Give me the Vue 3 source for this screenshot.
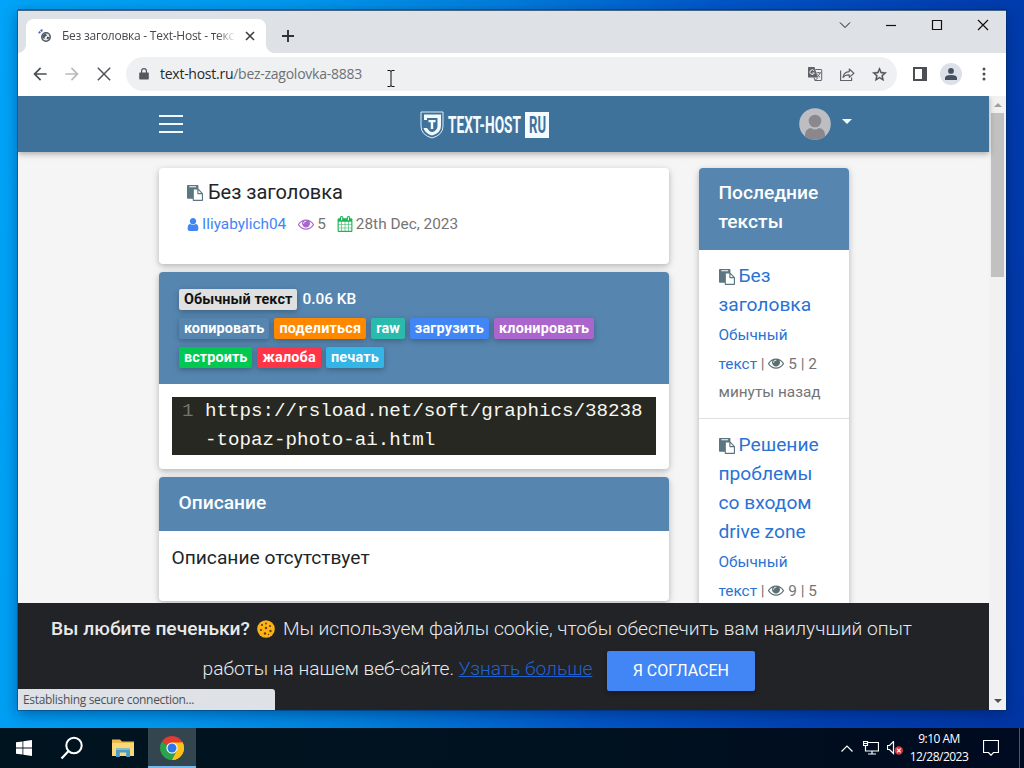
<template>
    <div class="desktop">
        <div class="window">
            <!-- Tab strip -->
            <div class="tab-strip">
                <div class="tab">
                    <svg class="favicon" viewBox="0 0 16 16" width="16" height="16">
                        <circle cx="9" cy="9" r="4.2" fill="#e8eaec" stroke="#4c5560" stroke-width="1.5" />
                        <path d="M5.500 7l3-1.500 1.500 2-2.200 1.300-.4 2.400L5.500 9.500zM10 8.800l2.500.2-1.200 2.500-1.600-.8z" fill="#4c5560" />
                        <path d="M2.200 5.400Q2.800 2.600 6 2.300" fill="none" stroke="#3d63b8" stroke-width="2" stroke-dasharray="2 .8" />
                    </svg>
                    <span class="tab-title">Без заголовка - Text-Host - текс</span>
                    <svg class="tab-close" viewBox="0 0 10 10" width="10" height="10">
                        <path d="M1 1l8 8M9 1l-8 8" stroke="#3c4043" stroke-width="1.6" />
                    </svg>
                </div>
                <svg class="new-tab" viewBox="0 0 12 12" width="12" height="12">
                    <path d="M6 0v12M0 6h12" stroke="#2f3337" stroke-width="1.9" />
                </svg>
                <div class="window-controls">
                    <svg viewBox="0 0 12 12" width="12" height="12"><path d="M1 3.500l5 5 5-5" stroke-width="1" /></svg>
                    <svg viewBox="0 0 12 12" width="12" height="12"><path d="M1 6.500h10" /></svg>
                    <svg viewBox="0 0 12 12" width="12" height="12"><path d="M1.500 1.500h9v9h-9z" /></svg>
                    <svg viewBox="0 0 12 12" width="12" height="12"><path d="M1 1l10 10M11 1L1 11" /></svg>
                </div>
            </div>

            <!-- Toolbar -->
            <div class="toolbar">
                <svg class="nav-icon" viewBox="0 0 24 24"><path d="M20 11H7.83l5.59-5.59L12 4l-8 8 8 8 1.41-1.41L7.83 13H20v-2z" /></svg>
                <svg class="nav-icon disabled" viewBox="0 0 24 24"><path d="M12 4l-1.41 1.41L16.17 11H4v2h12.17l-5.58 5.59L12 20l8-8z" /></svg>
                <svg class="nav-icon" viewBox="0 0 24 24"><path d="M20 5.2L18.8 4 12 10.8 5.2 4 4 5.2l6.8 6.8L4 18.8 5.2 20l6.8-6.8 6.8 6.8 1.2-1.2-6.8-6.8z" /></svg>
                <div class="address-bar">
                    <svg class="lock" viewBox="0 0 10 12" width="10" height="12">
                        <path d="M1 4.5h8q.8 0 .8.8v5.5q0 .8-.8.8H1q-.8 0-.8-.8V5.3q0-.8.8-.8z" fill="#55595e" />
                        <path d="M2.600 5V3a2.400 2.400 0 0 1 4.800 0v2" fill="none" stroke="#55595e" stroke-width="1.2" />
                    </svg>
                    <span class="url"><span class="host">text-host.ru</span>/bez-zagolovka-8883</span>
                    <div class="address-actions">
                        <svg viewBox="0 0 16 16" width="16" height="16">
                            <path d="M1.500 1h6l3.300 10.500H1.500q-.5 0-.5-.5V1.500q0-.5.5-.5z" fill="#5f6368" />
                            <path d="M8.500 3.500h5.500q.7 0 .7.7v9.600q0 .7-.7.7H8L7 11.500M11 11.500l-3 3" fill="none" stroke="#5f6368" />
                            <path d="M7.200 4.800A2.300 2.300 0 1 0 7.400 7H5.400" fill="none" stroke="#f1f3f4" />
                            <path d="M9.400 6.800H14M11.500 6v.8M13.200 6.800q-.8 2.700-3 4.200M10.400 8.300q1 1.800 2.800 3" fill="none" stroke="#5f6368" stroke-width=".9" />
                        </svg>
                        <svg viewBox="0 0 16 16" width="16" height="16">
                            <path d="M1.600 4.500v10h11v-3M4 11.500Q4.700 5.800 10.300 5.600V3l4.600 4.200-4.600 4.200V8.800Q6 8.600 4 11.500z" fill="none" stroke="#5f6368" stroke-width="1.2" stroke-linejoin="round" />
                        </svg>
                        <svg viewBox="0 0 24 24" width="17" height="17">
                            <path d="M22 9.240l-7.190-.62L12 2 9.190 8.630 2 9.240l5.460 4.730L5.820 21 12 17.270 18.180 21l-1.630-7.030L22 9.240zM12 15.400l-3.760 2.270 1-4.280-3.320-2.880 4.380-.38L12 6.100l1.710 4.040 4.380.38-3.320 2.880 1 4.280L12 15.400z" fill="#4e5257" stroke="#4e5257" stroke-width=".5" />
                        </svg>
                    </div>
                </div>
                <svg class="side-panel" viewBox="0 0 14 14" width="14" height="14">
                    <path d="M0 0h14v14H0zM2 2v10h7V2z" fill="#4b4f54" fill-rule="evenodd" />
                </svg>
                <div class="profile">
                    <svg viewBox="0 0 12 12" width="12" height="12">
                        <circle cx="6" cy="2.900" r="2.900" fill="#46505f" />
                        <path d="M0 12v-2q0-3 6-3t6 3v2z" fill="#46505f" />
                    </svg>
                </div>
                <svg class="kebab" viewBox="0 0 4 14" width="4" height="14">
                    <circle v-for="y in [2, 7, 12]" :key="y" cx="2" :cy="y" r="1.5" fill="#4b4f54" />
                </svg>
            </div>

            <!-- Page -->
            <div class="viewport">
                <div class="page">
                    <header class="site-header">
                        <div class="burger"><i></i><i></i><i></i></div>
                        <svg class="logo" viewBox="0 0 130 28" width="130" height="28">
                            <path d="M1 1h22v14q0 9-11 12Q1 24 1 15z" fill="none" stroke="#dcecf8" stroke-width="1" />
                            <path d="M4 3.500h17v11.500q0 7-9 9.500-7.500-2.300-8.500-7.500h3.500q1.500 3 5 4.300 5.500-1.800 5.500-6.300V7H7v2H4z" fill="#f4fbff" />
                            <path d="M8.500 9h7v2.300h-2.300V18h-2.400v-6.700H8.500z" fill="#f4fbff" />
                            <text class="logo-text" x="28" y="22" textLength="73" lengthAdjust="spacingAndGlyphs">TEXT-HOST</text>
                            <path d="M105 1h24v26h-24z" fill="#f4fbff" />
                            <text class="logo-ru" x="109" y="22" textLength="17" lengthAdjust="spacingAndGlyphs">RU</text>
                        </svg>
                        <div class="account">
                            <svg viewBox="0 0 32 32" width="32" height="32">
                                <clipPath id="avatar"><circle cx="16" cy="16" r="15.800" /></clipPath>
                                <g clip-path="url(#avatar)">
                                    <path d="M0 0h32v32H0z" fill="#bdbdc4" />
                                    <circle cx="16" cy="13" r="6.300" fill="#8b888d" />
                                    <path d="M6 32v-5q0-6 6-7 4 3 8 0 6 1 6 7v5z" fill="#8b888d" />
                                </g>
                            </svg>
                            <span class="caret"></span>
                        </div>
                    </header>

                    <div class="columns">
                        <main class="main-column">
                            <section class="card title-card">
                                <h1 class="title"><svg class="paste" viewBox="0 0 1792 1792"><path :d="icons.paste" /></svg><span>Без заголовка</span></h1>
                                <div class="meta">
                                    <svg class="user" viewBox="192 0 1408 1792"><path :d="icons.user" /></svg>
                                    <a class="author">Iliyabylich04</a>
                                    <svg class="eye purple" viewBox="0 0 1792 1792"><path :d="icons.eye" /></svg>
                                    <span class="views">5</span>
                                    <svg class="calendar" viewBox="0 0 1792 1792"><path :d="icons.calendar" /></svg>
                                    <span>28th Dec, 2023</span>
                                </div>
                            </section>

                            <section class="card paste-card">
                                <div class="card-header paste-header">
                                    <div class="badge-row">
                                        <span class="badge plain">Обычный текст</span>
                                        <span class="size">0.06 KB</span>
                                    </div>
                                    <div v-for="(row, i) in actions" :key="i" class="badge-row">
                                        <span v-for="item in row" :key="item.label" class="badge" :class="item.color">{{ item.label }}</span>
                                    </div>
                                </div>
                                <div class="code">
                                    <span class="line-number">1</span>
                                    <span class="code-text">https://rsload.net/soft/graphics/38238<br>-topaz-photo-ai.html</span>
                                </div>
                            </section>

                            <section class="card description-card">
                                <div class="card-header description-header">Описание</div>
                                <p class="description">Описание отсутствует</p>
                            </section>
                        </main>

                        <aside class="card sidebar">
                            <div class="card-header sidebar-header">Последние<br>тексты</div>
                            <div v-for="item in recent" :key="item.views" class="recent-item">
                                <div v-for="(line, i) in item.title" :key="line" class="recent-line">
                                    <svg v-if="i === 0" class="paste" viewBox="0 0 1792 1792"><path :d="icons.paste" /></svg><a>{{ line }}</a>
                                </div>
                                <div class="recent-meta"><a>Обычный</a></div>
                                <div class="recent-meta">
                                    <a>текст</a> | <svg class="eye" viewBox="0 0 1792 1792"><path :d="icons.eye" /></svg> {{ item.views }} | {{ item.age }}
                                </div>
                                <div v-if="item.unit" class="recent-meta last">{{ item.unit }}</div>
                            </div>
                        </aside>
                    </div>

                    <div class="cookie-banner">
                        <div class="cookie-row">
                            <b>Вы любите печеньки?</b>
                            <svg class="cookie" viewBox="0 0 18 18" width="18" height="18">
                                <circle cx="9" cy="9" r="8.800" fill="#fcb316" />
                                <circle v-for="(c, i) in chips" :key="i" :cx="c[0]" :cy="c[1]" :r="c[2]" fill="#6b3a13" />
                            </svg>
                            <span>Мы используем файлы cookie, чтобы обеспечить вам наилучший опыт</span>
                        </div>
                        <div class="cookie-row">
                            <span class="cookie-tail">работы на нашем веб-сайте.</span>
                            <a class="learn-more">Узнать больше</a>
                            <button class="agree">Я СОГЛАСЕН</button>
                        </div>
                    </div>
                </div>

                <div class="scrollbar">
                    <span class="arrow up"></span>
                    <span class="thumb"></span>
                    <span class="arrow down"></span>
                </div>
                <div class="status">Establishing secure connection...</div>
            </div>
        </div>

        <!-- Taskbar -->
        <div class="taskbar">
            <div class="task">
                <svg viewBox="0 0 16 16" width="16" height="16">
                    <path d="M0 2.300l6.500-.9v6.200H0zM7.300 1.300L16 0v7.600H7.300zM0 8.400h6.500v6.200L0 13.700zM7.300 8.400H16V16l-8.700-1.300z" fill="#fff" />
                </svg>
            </div>
            <div class="task search">
                <svg viewBox="0 0 24 24" width="24" height="24">
                    <circle cx="14" cy="9.500" r="7.700" fill="none" stroke="#fff" stroke-width="2" />
                    <path d="M8.600 15L1.500 22.500" stroke="#fff" stroke-width="2.200" />
                </svg>
            </div>
            <div class="task files">
                <svg viewBox="0 0 22 20" width="22" height="20">
                    <path d="M0 1.500h8l2 2h12V18H0z" fill="#e9b94b" />
                    <path d="M0 5h22v13H0z" fill="#fbd877" />
                    <path d="M4 10.500h14V19h-3.800v-4.500H7.800V19H4z" fill="#4a9cc6" />
                    <path d="M4 10.500h14v1.500H4z" fill="#78bfdf" />
                </svg>
            </div>
            <div class="task active">
                <svg viewBox="0 0 24 24" width="24" height="24">
                    <path d="M12 12L1.610 6A12 12 0 0 1 22.390 6z" fill="#e33b2e" />
                    <path d="M12 12l10.390-6A12 12 0 0 1 12 24z" fill="#fbc116" />
                    <path d="M12 12v12A12 12 0 0 1 1.610 6z" fill="#2ba24c" />
                    <path d="M12 6.500h10.700L22.390 6H12z" fill="#e33b2e" />
                    <path d="M12 6.500h10.650A12 12 0 0 1 12 24l4.800-9.200z" fill="#fbc116" />
                    <path d="M7.200 14.800L1.610 6 12 12l4.800 2.800L12 24z" fill="#2ba24c" />
                    <circle cx="12" cy="12" r="5.600" fill="#fff" />
                    <circle cx="12" cy="12" r="4.500" fill="#2f77e6" />
                </svg>
            </div>
            <div class="tray">
                <svg viewBox="0 0 12 7" width="12" height="7"><path d="M.5 6.500L6 1l5.500 5.500" /></svg>
                <svg class="tray-net" viewBox="0 0 16 14" width="16" height="14">
                    <path d="M5 1.500h10.500v8.500H4.500M.5.500h4v4h-4zM2.500 4.500v5.500h2M9 10v3M5 13h8M1 2.500h3" />
                </svg>
                <svg class="tray-sound" viewBox="0 0 16 14" width="16" height="14">
                    <path d="M.5 4.500h2l4-4v12l-4-4h-2z" />
                    <circle class="mute" cx="11.800" cy="9.500" r="4.200" />
                    <path d="M10 7.700l3.600 3.600M13.600 7.700L10 11.300" />
                </svg>
                <div class="clock">9:10 AM<br>12/28/2023</div>
                <svg viewBox="0 0 16 16" width="16" height="16"><path d="M.5.500h15v12h-5L8 15.200 5.500 12.500h-5z" /></svg>
            </div>
        </div>

        <svg class="pointer" viewBox="0 0 8 17" width="8" height="17">
            <path d="M.5.500h2.500l1 .8 1-.8h2.500M4 1v15M.5 16.500H3l1-.8 1 .8h2.500" fill="none" stroke="#111" />
        </svg>
    </div>
</template>

<script setup>
const icons = {
    paste: 'M768 1664h896v-640h-416q-40 0-68-28t-28-68v-416h-384v1152zm256-1440v-64q0-13-9.5-22.5t-22.5-9.5h-704q-13 0-22.5 9.5t-9.5 22.5v64q0 13 9.5 22.5t22.5 9.5h704q13 0 22.5-9.5t9.5-22.5zm256 672h299l-299-299v299zm512 128v672q0 40-28 68t-68 28h-960q-40 0-68-28t-28-68v-160h-544q-40 0-68-28t-28-68v-1344q0-40 28-68t68-28h1088q40 0 68 28t28 68v328q21 13 36 28l408 408q28 28 48 76t20 88z',
    eye: 'M1664 960q-152-236-381-353 61 104 61 225 0 185-131.5 316.5t-316.5 131.5-316.5-131.5-131.5-316.5q0-121 61-225-229 117-381 353 133 205 333.5 326.5t434.5 121.5 434.5-121.5 333.5-326.5zm-720-384q0-20-14-34t-34-14q-125 0-214.5 89.5t-89.5 214.5q0 20 14 34t34 14 34-14 14-34q0-86 61-147t147-61q20 0 34-14t14-34zm848 384q0 34-20 69-140 230-376.5 368.5t-499.5 138.5-499.5-139-376.5-368q-20-35-20-69t20-69q140-229 376.5-368t499.5-139 499.5 139 376.5 368q20 35 20 69z',
    user: 'M1536 1399q0 109-62.5 187t-150.5 78h-854q-88 0-150.5-78t-62.5-187q0-85 8.5-160.5t31.5-152 58.5-131 94-89 134.5-34.5q131 128 313 128t313-128q76 0 134.5 34.5t94 89 58.5 131 31.5 152 8.5 160.5zm-256-887q0 159-112.5 271.5t-271.5 112.5-271.5-112.5-112.5-271.5 112.5-271.5 271.5-112.5 271.5 112.5 112.5 271.5z',
    calendar: 'M192 1664h288v-288h-288v288zm352 0h320v-288h-320v288zm-352-352h288v-320h-288v320zm352 0h320v-320h-320v320zm-352-384h288v-288h-288v288zm736 736h320v-288h-320v288zm-384-736h320v-288h-320v288zm768 736h288v-288h-288v288zm-384-352h320v-320h-320v320zm-352-864v-288q0-13-9.5-22.5t-22.5-9.5h-64q-13 0-22.5 9.5t-9.5 22.5v288q0 13 9.5 22.5t22.5 9.5h64q13 0 22.5-9.5t9.5-22.5zm736 864h288v-320h-288v320zm-384-384h320v-288h-320v288zm384 0h288v-288h-288v288zm32-480v-288q0-13-9.5-22.5t-22.5-9.5h-64q-13 0-22.5 9.5t-9.5 22.5v288q0 13 9.5 22.5t22.5 9.5h64q13 0 22.5-9.5t9.5-22.5zm384-64v1280q0 52-38 90t-90 38h-1408q-52 0-90-38t-38-90v-1280q0-52 38-90t90-38h128v-96q0-66 47-113t113-47h64q66 0 113 47t47 113v96h384v-96q0-66 47-113t113-47h64q66 0 113 47t47 113v96h128q52 0 90 38t38 90z'
};

const actions = [
    [
        { label: 'копировать', color: 'steel' },
        { label: 'поделиться', color: 'orange' },
        { label: 'raw', color: 'teal' },
        { label: 'загрузить', color: 'blue' },
        { label: 'клонировать', color: 'violet' }
    ],
    [
        { label: 'встроить', color: 'green' },
        { label: 'жалоба', color: 'red' },
        { label: 'печать', color: 'sky' }
    ]
];

const recent = [
    { title: ['Без', 'заголовка'], views: 5, age: 2, unit: 'минуты назад' },
    { title: ['Решение', 'проблемы', 'со входом', 'drive zone'], views: 9, age: 5 }
];

// Chocolate chips: x, y, radius
const chips = [[5, 5, 1.1], [9, 3.5, 0.9], [13, 6, 1.1], [9, 8, 1.2], [4, 10, 1.1], [13.5, 11, 1.2], [8, 13.5, 1.2], [11.5, 14.5, 0.7]];
</script>

<style>
body {
    margin: 0;
    overflow: hidden;
}
</style>

<style scoped>
.desktop {
    position: relative;
    width: 1024px;
    height: 768px;
    display: flex;
    flex-direction: column;
    overflow: hidden;
    background: linear-gradient(100deg, #00a4f8 0%, #0099ee 25%, #0080dd 42%, #0057c8 62%, #0040b2 82%, #0035a3 100%);
    font-family: "Open Sans", "Noto Sans", sans-serif;
}

.window {
    width: 988px;
    height: 700px;
    margin: 10px 0 0 18px;
    flex: none;
    box-sizing: border-box;
    border-top: 1px solid #46637f;
    box-shadow: 0 0 0 1px rgba(0, 40, 90, 0.4), 0 4px 14px rgba(0, 20, 70, 0.45);
}

/* Tab strip */
.tab-strip {
    height: 42px;
    display: flex;
    align-items: flex-start;
    background: #dee1e6;
}

.tab {
    position: relative;
    width: 240px;
    height: 34px;
    margin: 8px 0 0 8px;
    display: flex;
    align-items: center;
    background: #fff;
    border-radius: 8px 8px 0 0;
}

.tab::before,
.tab::after {
    content: "";
    position: absolute;
    bottom: 0;
    width: 8px;
    height: 8px;
}

.tab::before {
    left: -8px;
    background: radial-gradient(circle at 0 0, #dee1e6 7.5px, #fff 8px);
}

.tab::after {
    right: -8px;
    background: radial-gradient(circle at 100% 0, #dee1e6 7.5px, #fff 8px);
}

.favicon {
    margin-left: 11px;
}

.tab-title {
    width: 173px;
    margin-left: 9px;
    overflow: hidden;
    white-space: nowrap;
    font-size: 12px;
    line-height: 16px;
    letter-spacing: -0.25px;
    color: #45494d;
    -webkit-mask-image: linear-gradient(90deg, #000 155px, transparent 174px);
    mask-image: linear-gradient(90deg, #000 155px, transparent 174px);
}

.tab-close {
    margin-left: 10px;
}

.new-tab {
    margin: 19px 0 0 16px;
}

.window-controls {
    display: flex;
    gap: 34px;
    margin: 8px 17px 0 auto;
}

.window-controls svg {
    fill: none;
    stroke: #111;
    stroke-width: 1.2;
}

/* Toolbar */
.toolbar {
    height: 43px;
    box-sizing: border-box;
    display: flex;
    align-items: center;
    padding-bottom: 1px;
    background: #fff;
}

.nav-icon {
    width: 20px;
    height: 20px;
    margin-left: 12px;
    fill: #4b4f54;
}

.nav-icon.disabled {
    fill: #b9bbbe;
}

.address-bar {
    width: 771px;
    height: 34px;
    margin-left: 12px;
    display: flex;
    align-items: center;
    border-radius: 17px;
    background: #eff0f2;
}

.lock {
    margin-left: 13px;
}

.url {
    margin-left: 11px;
    white-space: nowrap;
    font-size: 14px;
    line-height: 20px;
    letter-spacing: -0.26px;
    color: #6c7075;
}

.host {
    color: #26292d;
}

.address-actions {
    display: flex;
    align-items: center;
    gap: 16px;
    margin: 0 9px 0 auto;
}

.side-panel {
    margin-left: 16px;
}

.profile {
    width: 22px;
    height: 22px;
    margin-left: 13px;
    display: flex;
    align-items: center;
    justify-content: center;
    border-radius: 50%;
    background: #dce0e8;
}

.kebab {
    margin-left: 20px;
}

/* Page */
.viewport {
    position: relative;
    height: 614px;
    display: flex;
    overflow: hidden;
    background: #f5f5f6;
}

.page {
    width: 971px;
    font-family: Roboto, sans-serif;
}

.site-header {
    position: relative;
    height: 56px;
    display: flex;
    align-items: center;
    padding-left: 141px;
    background: #3f729b;
    box-shadow: 0 2px 5px rgba(0, 0, 0, 0.2), 0 2px 8px rgba(0, 0, 0, 0.12);
}

.burger {
    width: 24px;
    display: flex;
    flex-direction: column;
    gap: 6px;
}

.burger i {
    height: 2px;
    background: #eef8ff;
}

.logo {
    margin: 1px 0 0 237px;
    overflow: visible;
}

.logo-text,
.logo-ru {
    font: 700 24px Roboto, sans-serif;
    fill: #f4fbff;
}

.logo-ru {
    fill: #3f729b;
}

.account {
    display: flex;
    align-items: center;
    gap: 11px;
    margin-left: 249px;
}

.caret {
    margin-top: -5px;
    border: 5px solid transparent;
    border-top-color: #f4fbff;
    border-bottom: 0;
}

.columns {
    display: flex;
    align-items: flex-start;
    gap: 30px;
    padding: 16px 140px 0 141px;
}

.main-column {
    width: 510px;
    display: flex;
    flex-direction: column;
    gap: 8px;
}

.card {
    border-radius: 4px;
    background: #fff;
    box-shadow: 0 2px 5px rgba(0, 0, 0, 0.16), 0 2px 10px rgba(0, 0, 0, 0.12);
}

.card-header {
    box-sizing: border-box;
    border-radius: 4px 4px 0 0;
    background: #5686b0;
    color: #fff;
    font-size: 19.2px;
    line-height: 29px;
}

.title-card {
    height: 96px;
    box-sizing: border-box;
    padding: 8px 28px;
}

.title {
    display: flex;
    align-items: center;
    gap: 5px;
    margin: 0;
    line-height: 32px;
    font-size: 20px;
    font-weight: 400;
    color: #212529;
}

.title .paste {
    margin-top: 2px;
}

.paste {
    width: 16px;
    height: 16px;
    fill: #5b7680;
}

.meta {
    display: flex;
    align-items: center;
    line-height: 32px;
    font-size: 15.36px;
    color: #757575;
}

.user {
    width: 12px;
    height: 15px;
    fill: #4285f4;
}

.author {
    margin: 0 12px 0 3px;
    color: #4285f4;
}

.eye {
    width: 16px;
    height: 16px;
    vertical-align: -2px;
    fill: #5b6f73;
}

.eye.purple {
    fill: #aa66cc;
}

.views {
    margin: 0 11px 0 3px;
}

.calendar {
    width: 16px;
    height: 16px;
    margin-right: 3px;
    fill: #1fb556;
}

/* Paste body */
.paste-card {
    height: 197px;
}

.paste-header {
    height: 112px;
    padding: 13px 20px 12px;
}

.badge-row {
    height: 29px;
    display: flex;
    align-items: center;
    gap: 5px;
}

.badge {
    height: 21px;
    padding: 0 5px;
    border-radius: 2px;
    line-height: 21px;
    font-size: 14.4px;
    font-weight: 700;
    letter-spacing: 0.09px;
    white-space: nowrap;
    color: #fff;
    box-shadow: 0 2px 5px rgba(0, 0, 0, 0.18), 0 2px 8px rgba(0, 0, 0, 0.1);
}

.violet,
.blue,
.orange,
.red,
.sky {
    letter-spacing: 0.2px;
}

.plain {
    background: #e0e0e0;
    color: #111;
}

.size {
    font-size: 15.36px;
    font-weight: 500;
}

.steel { background: #5686b0; }
.orange { background: #ff8800; }
.teal { background: #2bbbad; }
.blue { background: #4285f4; }
.violet { background: #aa66cc; }
.green { background: #00c851; }
.red { background: #ff3547; }
.sky { background: #33b5e5; }

.code {
    width: 484px;
    height: 58px;
    margin: 13px 13px 0 12.5px;
    display: flex;
    background: #272822;
    color: #f8f8f2;
    font-family: "Liberation Mono", monospace;
    font-size: 19.2px;
    line-height: 29px;
}

.line-number {
    width: 22px;
    margin-right: 11.5px;
    text-align: right;
    color: #74756c;
}

.description-card {
    height: 124px;
}

.description-header {
    height: 54px;
    padding: 11px 19.5px;
    font-weight: 500;
}

.description {
    margin: 0;
    padding: 12px 12.5px;
    font-size: 19.2px;
    line-height: 29px;
    color: #212529;
}

/* Sidebar */
.sidebar {
    width: 150px;
    height: 450px;
}

.sidebar-header {
    height: 82px;
    padding: 11px 19.5px;
    font-weight: 500;
    line-height: 28.5px;
}

.recent-item {
    padding: 11px 0 12px 19.5px;
    border-bottom: 1px solid #dfdfdf;
    line-height: 29px;
    color: #757575;
    white-space: nowrap;
}

.recent-line {
    font-size: 19.2px;
}

.recent-line .paste {
    margin-right: 4px;
    vertical-align: -3px;
}

.recent-line a,
.recent-meta a {
    color: #2a72d4;
}

/* Small text sits a little lower than the title lines */
.recent-meta {
    height: 29px;
    box-sizing: border-box;
    padding-top: 1.5px;
    font-size: 15.36px;
}

.recent-meta.last {
    padding-top: 1px;
}

/* Cookie banner */
.cookie-banner {
    position: absolute;
    left: 0;
    bottom: 0;
    width: 971px;
    height: 107px;
    box-sizing: border-box;
    padding-top: 6px;
    background: #212327;
    color: #e9e9ea;
    font-size: 19.2px;
    font-weight: 300;
}

.cookie-row {
    height: 40px;
    display: flex;
    align-items: center;
    line-height: 28px;
    white-space: nowrap;
}

.cookie-row b {
    margin-left: 33px;
    font-weight: 500;
}

.cookie {
    margin: 0 8px 0 7px;
}

.cookie-tail {
    margin-left: 184.5px;
}

.learn-more {
    margin-left: 4.5px;
    color: #1f62d2;
    text-decoration: underline;
}

.agree {
    width: 148px;
    height: 40px;
    margin: 4px 0 0 15px;
    padding: 0 1px 1px 0;
    border: 0;
    border-radius: 2px;
    background: #4285f4;
    color: #fff;
    font: 400 16px Roboto, sans-serif;
    box-shadow: 0 2px 5px rgba(0, 0, 0, 0.3);
}

.scrollbar {
    width: 17px;
    display: flex;
    flex-direction: column;
    align-items: center;
    background: #f1f1f1;
}

.arrow {
    border: 4px solid transparent;
}

.up {
    margin-top: 7px;
    border-top: 0;
    border-bottom-color: #a0a0a0;
}

.thumb {
    width: 13px;
    height: 164px;
    margin-top: 6px;
    background: #c1c1c1;
}

.down {
    margin: auto 0 7px;
    border-bottom: 0;
    border-top-color: #505050;
}

.status {
    position: absolute;
    left: 0;
    bottom: 0;
    width: 257px;
    height: 21px;
    box-sizing: border-box;
    padding-left: 5px;
    border-radius: 0 3px 0 0;
    background: #dee1e6;
    color: #4d5156;
    font-size: 12px;
    line-height: 22px;
    letter-spacing: -0.32px;
}

/* Taskbar */
.taskbar {
    height: 40px;
    margin-top: auto;
    display: flex;
    background: linear-gradient(90deg, #001420, #00121f 55%, #000a20);
}

.task {
    width: 48px;
    display: flex;
    align-items: center;
    justify-content: center;
}

.files {
    margin-left: 3px;
}

.active {
    margin-left: 1px;
    box-sizing: border-box;
    padding-top: 2px;
    border-bottom: 2px solid #76b9ed;
    background: #33454f;
}

.tray {
    display: flex;
    align-items: center;
    margin-left: auto;
    margin-right: 4px;
    padding-right: 20px;
    border-right: 1px solid #4d5668;
    color: #fff;
}

.tray svg {
    fill: none;
    stroke: #fff;
    stroke-width: 1.2;
}

.tray .mute {
    fill: #d8363f;
    stroke: none;
}

.tray-net {
    margin-left: 10px;
}

.tray-sound {
    margin-left: 8px;
}

.clock {
    width: 60px;
    margin: 0 14px 0 6px;
    text-align: center;
    white-space: nowrap;
    font-size: 12px;
    line-height: 18px;
    letter-spacing: -0.5px;
}

.pointer {
    position: absolute;
    left: 387px;
    top: 70px;
}
</style>
